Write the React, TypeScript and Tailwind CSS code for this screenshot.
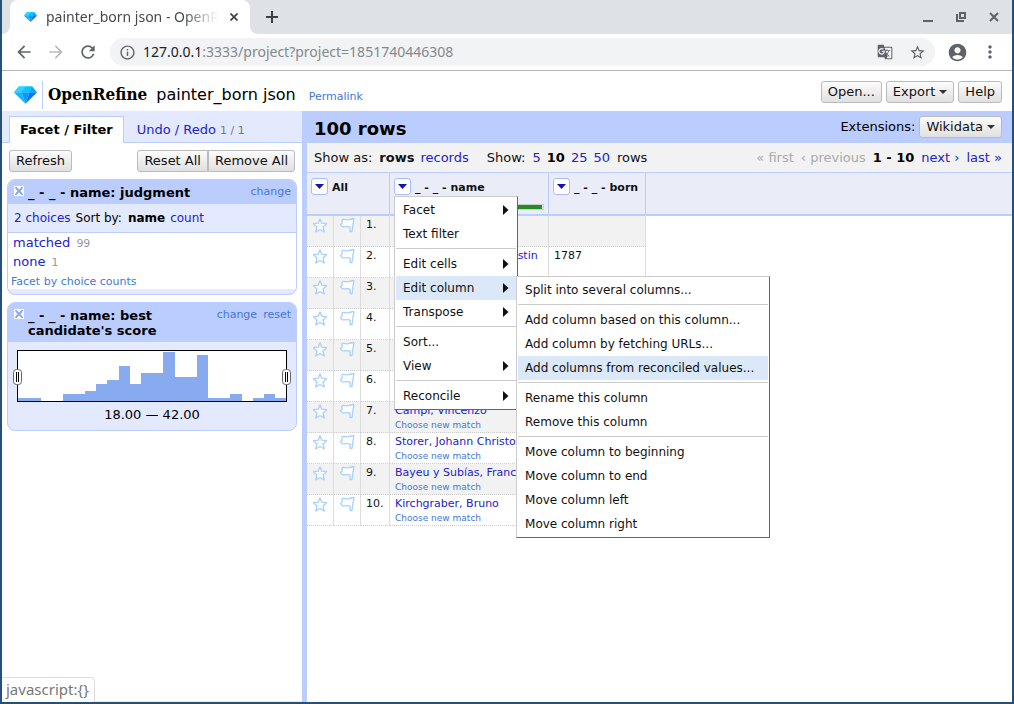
import type { ReactNode } from 'react';
import {
  MdAccountCircle,
  MdArrowBack,
  MdArrowForward,
  MdGTranslate,
  MdInfoOutline,
  MdMoreVert,
  MdRefresh,
  MdStarBorder
} from 'react-icons/md';

type MenuEntry = { label: string; sub?: boolean; open?: boolean } | null;

const COLUMN_MENU: MenuEntry[] = [
  { label: 'Facet', sub: true },
  { label: 'Text filter' },
  null,
  { label: 'Edit cells', sub: true },
  { label: 'Edit column', sub: true, open: true },
  { label: 'Transpose', sub: true },
  null,
  { label: 'Sort...' },
  { label: 'View', sub: true },
  null,
  { label: 'Reconcile', sub: true }
];

const EDIT_COLUMN_MENU: MenuEntry[] = [
  { label: 'Split into several columns...' },
  null,
  { label: 'Add column based on this column...' },
  { label: 'Add column by fetching URLs...' },
  { label: 'Add columns from reconciled values...', open: true },
  null,
  { label: 'Rename this column' },
  { label: 'Remove this column' },
  null,
  { label: 'Move column to beginning' },
  { label: 'Move column to end' },
  { label: 'Move column left' },
  { label: 'Move column right' }
];

const ROWS = [
  { name: '', born: '' },
  { name: 'Schwarz, Johann Augustin', born: '1787' },
  { name: '', born: '' },
  { name: '', born: '' },
  { name: '', born: '' },
  { name: '', born: '' },
  { name: 'Campi, Vincenzo', born: '' },
  { name: 'Storer, Johann Christoph', born: '' },
  { name: 'Bayeu y Subías, Francisco', born: '' },
  { name: 'Kirchgraber, Bruno', born: '' }
];

// one value per bin, 18 to 42
const SCORE_BINS = [3, 3, 0, 0, 7, 7, 10, 17, 21, 35, 17, 28, 28, 49, 24, 24, 46, 3, 3, 7, 0, 3, 7, 3];

function Gem({ className }: { className: string }) {
  return (
    <svg viewBox="0 0 24 18" className={className} aria-hidden="true">
      <path d="M5 0h14l5 6.500H0z" fill="#19c6ff" />
      <path d="M5 0h7L8 6.500H0z" fill="#2bd6ff" />
      <path d="M12 0h7l-3 6.500H8z" fill="#0cc4fd" />
      <path d="M19 0l5 6.500h-8z" fill="#12a4fa" />
      <path d="M0 6.500h8l4 11.500z" fill="#14b4ff" />
      <path d="M8 6.500h8l-4 11.500z" fill="#0c98ff" />
      <path d="M16 6.500h8L12 18z" fill="#0f78ee" />
    </svg>
  );
}

function Button({ children, className = '' }: { children: ReactNode; className?: string }) {
  return (
    <button
      type="button"
      className={`flex h-[22px] items-center gap-1 border border-[#bbb] bg-linear-to-b from-[#fcfcfc] to-[#e0e0e0] px-[6px] text-[13px] text-[#111] ${className || 'rounded-[3px]'}`}
    >
      {children}
    </button>
  );
}

function Caret() {
  return (
    <svg viewBox="0 0 8 4" className="h-1 w-2" aria-hidden="true">
      <path d="M0 0h8L4 4z" fill="#333" />
    </svg>
  );
}

function Star() {
  return (
    <svg viewBox="0 0 16 16" className="size-4" aria-hidden="true">
      <path
        d="M8 1.800L9.700 6.200L14.600 6.700L11 10L12.300 15L8 12.500L3.700 15L5 10L1.400 6.700L6.300 6.200z"
        fill="#fff"
        stroke="#a8d0ff"
        strokeWidth="1.300"
        strokeLinejoin="round"
      />
    </svg>
  );
}

function Flag() {
  return (
    <svg viewBox="0 0 16 16" className="size-4" aria-hidden="true">
      <path
        d="M3.200 2.700C5.500 1.700 7.500 3.800 10 2.500L14.800 1.500C15.200 4 13.600 6.500 13.800 9L13 14.500H11L11.300 10.500C9 8.200 6.500 10.800 3.300 9.600L1.400 7.500L3 6.500z"
        fill="#fff"
        stroke="#a8d0ff"
        strokeWidth="1.300"
        strokeLinejoin="round"
      />
    </svg>
  );
}

function RemoveFacet() {
  return (
    <button type="button" aria-label="Remove facet" className="mt-[2px] size-[10px] shrink-0 bg-white">
      <svg viewBox="0 0 10 10" className="size-[10px]">
        <path d="M2 2l6 6M8 2l-6 6" stroke="#88aaee" strokeWidth="2" />
        <path d="M1 1h2v1H1zM7 1h2v1H7zM1 8h2v1H1zM7 8h2v1H7z" fill="#88aaee" />
      </svg>
    </button>
  );
}

function Menu({ entries, className, children }: { entries: MenuEntry[]; className: string; children?: ReactNode }) {
  return (
    <ul
      className={`absolute border border-t-[#ccc] border-r-[#666] border-b-[#666] border-l-[#ccc] bg-white p-px text-xs font-normal text-[#111] ${className}`}
    >
      {entries.map((entry, i) =>
        entry ? (
          <li key={entry.label} className="relative">
            <button
              type="button"
              className={`flex h-6 w-full items-center justify-between pr-[7px] pl-[7px] whitespace-nowrap ${entry.open ? 'bg-[#dbe8f8]' : ''}`}
            >
              {entry.label}
              {entry.sub ? (
                <svg viewBox="0 0 6 10" className="h-[10px] w-[6px]" aria-hidden="true">
                  <path d="M0 0l5.500 5L0 10z" fill="#111" />
                </svg>
              ) : null}
            </button>
            {entry.open ? children : null}
          </li>
        ) : (
          <li key={i} role="separator" className="mt-[2px] mb-[3px] h-px bg-[#ccc]" />
        )
      )}
    </ul>
  );
}

function ColumnHead({ title }: { title: string }) {
  return (
    <div className="flex h-[17px] items-center gap-1">
      <button
        type="button"
        aria-label={`${title} menu`}
        className="flex size-[17px] items-center justify-center rounded-[3px] border border-[#a8bcff] bg-white"
      >
        <svg viewBox="0 0 9 5" className="h-[5px] w-[9px]">
          <path d="M0 0h9L4.500 5z" fill="#1111bb" />
        </svg>
      </button>
      <span className="pt-[2px] leading-[15px] whitespace-nowrap">{title}</span>
    </div>
  );
}

function TabFlare({ className }: { className: string }) {
  return (
    <svg viewBox="0 0 8 8" className={`absolute bottom-0 size-2 ${className}`} aria-hidden="true">
      <path d="M8 0v8H0a8 8 0 0 0 8-8z" fill="#fff" />
    </svg>
  );
}

function BrowserChrome() {
  return (
    <header className="font-['Noto_Sans',sans-serif] text-sm text-[#5f6368]">
      <div className="flex h-[34px] items-center bg-[#dee1e6] pl-2">
        <div className="relative flex h-full w-60 items-center rounded-t-lg bg-white pr-2 pl-[14px]">
          <TabFlare className="-left-2" />
          <TabFlare className="-right-2 -scale-x-100" />
          <Gem className="h-[10px] w-[13px]" />
          <span className="ml-[9px] flex-1 overflow-hidden mask-r-from-80% whitespace-nowrap text-[#45484c]">
            painter_born json - OpenRefine
          </span>
          <button type="button" aria-label="Close tab" className="ml-2 flex size-4 items-center justify-center">
            <svg viewBox="0 0 8 8" className="size-2">
              <path d="M0.500 0.500l7 7M7.500 0.500l-7 7" stroke="#3c4043" strokeWidth="1.700" />
            </svg>
          </button>
        </div>
        <button type="button" aria-label="New tab" className="ml-4 size-3">
          <svg viewBox="0 0 12 12" className="size-3">
            <path d="M6 0v12M0 6h12" stroke="#3c4043" strokeWidth="2" />
          </svg>
        </button>
        <div className="mr-[13px] ml-auto flex items-center gap-[23px]">
          <button type="button" aria-label="Minimize">
            <svg viewBox="0 0 10 10" className="size-[10px]">
              <path d="M0 9h10" stroke="#5f6368" strokeWidth="2" />
            </svg>
          </button>
          <button type="button" aria-label="Restore">
            <svg viewBox="0 0 10 10" className="size-[10px]" fill="none" stroke="#5f6368" strokeWidth="2">
              <path d="M4 1h5v5H4z" />
              <path d="M1 2v7h7" />
            </svg>
          </button>
          <button type="button" aria-label="Close">
            <svg viewBox="0 0 10 10" className="size-[10px]">
              <path d="M1 1l8 8M9 1l-8 8" stroke="#5f6368" strokeWidth="2" />
            </svg>
          </button>
        </div>
      </div>

      <div className="flex h-[37px] items-center border-b border-[#b6b6b6] pr-[12px] pl-[12px]">
        <button type="button" aria-label="Back">
          <MdArrowBack size={20} />
        </button>
        <button type="button" aria-label="Forward" className="ml-3 text-[#bbb]">
          <MdArrowForward size={20} />
        </button>
        <button type="button" aria-label="Reload" className="ml-3">
          <MdRefresh size={20} />
        </button>
        <div className="ml-3 flex h-7 flex-1 items-center rounded-full bg-[#f1f3f4] px-[9px]">
          <MdInfoOutline size={17} />
          <span className="ml-[7px] text-[#85898d]">
            <span className="text-[#202124]">127.0.0.1</span>:3333/project?project=1851740446308
          </span>
          <button type="button" aria-label="Translate" className="ml-auto">
            <MdGTranslate size={16} />
          </button>
          <button type="button" aria-label="Bookmark" className="ml-4">
            <MdStarBorder size={17} />
          </button>
        </div>
        <button type="button" aria-label="Profile" className="ml-3">
          <MdAccountCircle size={21} />
        </button>
        <button type="button" aria-label="Browser menu" className="ml-[12px]">
          <MdMoreVert size={20} />
        </button>
      </div>
    </header>
  );
}

function ProjectHeader() {
  return (
    <div className="flex h-10 items-center pr-[10px] pl-3">
      <Gem className="mt-2 h-[18px] w-[23px]" />
      <div className="mt-2 ml-[5px] flex h-7 items-center border-l border-[#bbccff] pl-[5px]">
        <span className="font-['DejaVu_Serif_Condensed','DejaVu_Serif',serif] text-[17px] font-bold">OpenRefine</span>
      </div>
      <h1 className="mt-2 ml-[9px] text-base">painter_born json</h1>
      <a href="#permalink" className="mt-3 ml-[13px] text-[11px] text-[#4477dd]">
        Permalink
      </a>
      <div className="mt-px ml-auto flex gap-1">
        <Button>Open...</Button>
        <Button>
          Export <Caret />
        </Button>
        <Button>Help</Button>
      </div>
    </div>
  );
}

function Histogram() {
  return (
    <div className="relative mx-[9px] mt-2 h-[52px] border border-black bg-white">
      <svg viewBox="0 0 24 50" preserveAspectRatio="none" className="h-full w-full" shapeRendering="crispEdges">
        {SCORE_BINS.map((v, i) => (
          <rect key={i} x={i} y={50 - v} width="1.050" height={v} fill="#88aaee" />
        ))}
      </svg>
      <Handle className="-left-[5px]" />
      <Handle className="-right-[5px]" />
    </div>
  );
}

function Handle({ className }: { className: string }) {
  return (
    <svg viewBox="0 0 9 16" className={`absolute top-[18px] h-4 w-[9px] ${className}`} aria-hidden="true">
      <rect x="0.500" y="0.500" width="8" height="15" rx="3" fill="#fff" stroke="#666" />
      <path d="M3.500 3v10M5.500 3v10" stroke="#000" />
    </svg>
  );
}

function SidePanel() {
  return (
    <aside className="flex w-[300px] shrink-0 flex-col border-b border-[#e3e9ff] bg-white">
      <div className="flex h-8 items-end border-b border-[#bbccff] bg-[#e3e9ff] pl-[7px] text-[13px]">
        <button
          type="button"
          className="-mb-px h-[27px] border border-b-0 border-[#bbccff] bg-white px-[10px] font-bold"
        >
          Facet / Filter
        </button>
        <button type="button" className="h-[25px] px-[13px] text-[#2222cc]">
          Undo / Redo <span className="text-[11px] text-[#777]">1 / 1</span>
        </button>
      </div>

      <div className="flex px-[7px] pt-[7px]">
        <Button>Refresh</Button>
        <div className="ml-auto flex">
          <Button className="rounded-l-[3px]">Reset All</Button>
          <Button className="rounded-r-[3px]">Remove All</Button>
        </div>
      </div>

      <div className="flex flex-col gap-[7px] px-[5px] pt-[7px]">
        <section className="overflow-hidden rounded-lg border border-[#bbccff] bg-[#e3e9ff] pb-[5px]">
          <div className="flex gap-1 bg-[#bbccff] pt-[4px] pr-[5px] pb-[4px] pl-[6px]">
            <RemoveFacet />
            <h2 className="flex-1 pt-px text-[13px] leading-[15px] font-bold">_ - _ - name: judgment</h2>
            <a href="#change" className="text-[11px] leading-[15px] text-[#4477dd]">
              change
            </a>
          </div>
          <div className="flex h-[29px] items-center border-b border-[#bbccff] pb-px pl-[6px] text-xs">
            <a href="#choices" className="text-[#2222cc]">
              2 choices
            </a>
            <span className="ml-[5px]">Sort by:</span>
            <span className="ml-[6px] font-bold">name</span>
            <a href="#count" className="ml-[5px] text-[#2222cc]">
              count
            </a>
          </div>
          <ul className="bg-white px-[5px] text-[13px] leading-[19px]">
            <li className="flex h-[19px] items-baseline gap-[6px]">
              <a href="#matched" className="text-[#2222cc]">
                matched
              </a>
              <span className="text-[11px] text-[#999]">99</span>
            </li>
            <li className="flex h-[19px] items-baseline gap-[6px]">
              <a href="#none" className="text-[#2222cc]">
                none
              </a>
              <span className="text-[11px] text-[#999]">1</span>
            </li>
          </ul>
          <div className="bg-white px-[3px] pt-[3px] text-[11px] leading-[15px]">
            <a href="#counts" className="block text-[#4477dd]">
              Facet by choice counts
            </a>
          </div>
        </section>

        <section className="overflow-hidden rounded-lg border border-[#bbccff] bg-[#e3e9ff] pb-[5px]">
          <div className="flex gap-1 bg-[#bbccff] pt-[4px] pr-[5px] pb-[4px] pl-[6px]">
            <RemoveFacet />
            <h2 className="flex-1 pt-px text-[13px] leading-[15px] font-bold">
              _ - _ - name: best candidate's score
            </h2>
            <div className="flex gap-[6px] text-[11px] leading-[15px] text-[#4477dd]">
              <a href="#change">change</a>
              <a href="#reset">reset</a>
            </div>
          </div>
          <Histogram />
          <p className="mt-[3px] text-center text-[13px] leading-[20px]">18.00 — 42.00</p>
        </section>
      </div>
    </aside>
  );
}

function ViewBar() {
  return (
    <div className="flex h-[30px] items-center border-b border-[#bbccff] bg-[#f2f2f2] pr-[10px] pl-[7px] text-[13px] text-[#111]">
      <span>Show as:</span>
      <b className="ml-[7px]">rows</b>
      <a href="#records" className="ml-[6px] text-[#2222cc]">
        records
      </a>
      <span className="ml-[18px]">Show:</span>
      <div className="mx-[7px] flex gap-[6px] text-[#2222cc]">
        <a href="#5">5</a>
        <b className="text-black">10</b>
        <a href="#25">25</a>
        <a href="#50">50</a>
      </div>
      <span>rows</span>
      <div className="ml-auto flex gap-[7px] text-[#2222cc]">
        <span className="text-[#aaa]">« first</span>
        <span className="text-[#aaa]">‹ previous</span>
        <b className="text-black">1 - 10</b>
        <a href="#next">next ›</a>
        <a href="#last">last »</a>
      </div>
    </div>
  );
}

function DataTable() {
  const cell = 'border-r border-b border-r-[#ddd] border-b-[#ccc] [border-bottom-style:dotted] p-0 align-top';
  const head = 'border-r border-b-2 border-[#bbccff] px-[4px] pt-[5px] text-left align-top';

  return (
    <table className="w-full table-fixed border-separate border-spacing-0 text-[11px] text-[#111]">
      <colgroup>
        <col className="w-[27px]" />
        <col className="w-[27px]" />
        <col className="w-[29px]" />
        <col className="w-[159px]" />
        <col className="w-[97px]" />
        <col />
      </colgroup>
      <thead>
        <tr className="h-[43px] bg-[#eaedf8]">
          <th colSpan={3} className={head}>
            <ColumnHead title="All" />
          </th>
          <th className={`relative ${head}`}>
            <ColumnHead title="_ - _ - name" />
            <div className="mt-[9px] ml-px h-[6px] border border-[#ccc] bg-white">
              <div className="h-full w-[99%] bg-[#228b22]" />
            </div>
            <Menu entries={COLUMN_MENU} className="top-[23px] left-[4px] z-10 w-[124px]">
              <Menu entries={EDIT_COLUMN_MENU} className="top-0 left-[120px] w-[254px]" />
            </Menu>
          </th>
          <th className={head}>
            <ColumnHead title="_ - _ - born" />
          </th>
          <th className="border-b-2 border-[#bbccff]" />
        </tr>
      </thead>
      <tbody>
        {ROWS.map((row, i) => (
          <tr key={i} className="h-[31px] odd:bg-[#f2f2f2]">
            <td className={cell}>
              <button type="button" aria-label="Star row" className="mt-px ml-[5px] block">
                <Star />
              </button>
            </td>
            <td className={cell}>
              <button type="button" aria-label="Flag row" className="mt-px ml-[5px] block">
                <Flag />
              </button>
            </td>
            <td className={cell}>
              <div className="pl-[5px] leading-[17px]">{i + 1}.</div>
            </td>
            <td className={cell}>
              {row.name ? (
                <div className="pl-[5px] whitespace-nowrap">
                  <a href="#item" className="block leading-[17px] text-[#2222cc]">
                    {row.name}
                  </a>
                  <a href="#match" className="block text-[9px] leading-[12px] text-[#4477dd]">
                    Choose new match
                  </a>
                </div>
              ) : null}
            </td>
            <td className={cell}>
              <div className="pl-[5px] leading-[17px]">{row.born}</div>
            </td>
            <td className="bg-white" />
          </tr>
        ))}
      </tbody>
    </table>
  );
}

export default function App() {
  return (
    <div className="relative flex min-h-screen flex-col border-x-2 border-b-2 border-[#24507a] bg-white font-['DejaVu_Sans',sans-serif] text-black">
      <BrowserChrome />
      <ProjectHeader />
      <div className="flex flex-1">
        <SidePanel />
        <main className="min-w-0 flex-1 border-l-[5px] border-[#bbccff]">
          <div className="flex h-8 items-center justify-between bg-[#bbccff] pr-[10px] pl-[7px]">
            <h2 className="mt-[3px] text-lg leading-6 font-bold">100 rows</h2>
            <div className="flex items-center gap-1 text-[13px]">
              <span>Extensions:</span>
              <Button>
                Wikidata <Caret />
              </Button>
            </div>
          </div>
          <ViewBar />
          <DataTable />
        </main>
      </div>
      <div className="absolute bottom-0 left-0 h-[25px] rounded-tr border-t border-r border-[#ddd] bg-white pr-[5px] pl-[4px] font-['Noto_Sans',sans-serif] text-[15px] leading-[22px] text-[#777]">
        {'javascript:{}'}
      </div>
    </div>
  );
}
